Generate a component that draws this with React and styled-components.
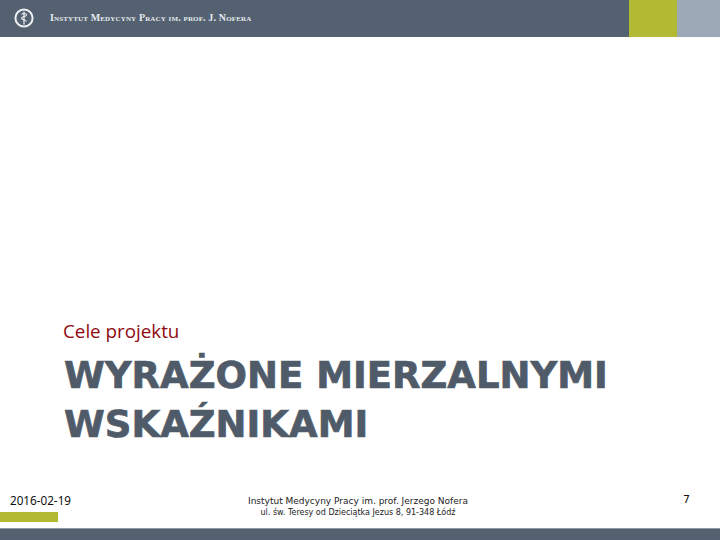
import React from "react";
import styled, { createGlobalStyle } from "styled-components";

const GlobalStyle = createGlobalStyle`
  html, body {
    margin: 0;
    padding: 0;
    background: #fff;
  }
`;

const Slide = styled.div`
  width: 720px;
  height: 540px;
  display: flex;
  flex-direction: column;
  overflow: hidden;
  background: #fff;
`;

const Header = styled.header`
  height: 37px;
  display: flex;
  align-items: stretch;
  background: #536171;
`;

const Brand = styled.div`
  flex: 1;
  display: flex;
  align-items: center;
  padding: 0 0 2px 13px;
  gap: 15px;
`;

const BrandName = styled.span`
  font-family: "Liberation Serif", serif;
  font-weight: bold;
  font-size: 10px;
  font-variant: small-caps;
  letter-spacing: 0.14px;
  color: #e8ebee;
  white-space: nowrap;
`;

const Block = styled.div`
  width: ${(p) => p.$width}px;
  background: ${(p) => p.$color};
`;

const Main = styled.main`
  flex: 1;
  display: flex;
  flex-direction: column;
  justify-content: flex-end;
  padding: 0 0 41px 64px;
`;

const Subtitle = styled.div`
  font-family: "Open Sans", sans-serif;
  font-size: 18.8px;
  line-height: 24px;
  color: #8f0a0f;
  margin-left: -1px;
  margin-bottom: 8px;
`;

const Title = styled.h1`
  margin: 0;
  font-family: "DejaVu Sans", sans-serif;
  font-weight: bold;
  font-size: 37px;
  line-height: 49px;
  color: #505b69;
  -webkit-text-stroke: 0.7px #505b69;
`;

const Footer = styled.footer`
  height: 38px;
  display: grid;
  grid-template-columns: 200px 316px 1fr;
`;

const DateCell = styled.div`
  display: flex;
  flex-direction: column;
  justify-content: space-between;
  height: 32px;
`;

const DateText = styled.div`
  font-family: "Noto Sans", sans-serif;
  font-size: 11.7px;
  line-height: 16px;
  padding: 2px 0 0 10px;
  color: #111;
`;

const LimeBar = styled.div`
  width: 58px;
  height: 10px;
  background: #b2ba33;
`;

const Address = styled.div`
  font-family: "DejaVu Sans", sans-serif;
  text-align: center;
  color: #222;
  padding-top: 5px;
`;

const AddressLine = styled.div`
  font-size: ${(p) => p.$size}px;
  line-height: 12px;
  white-space: nowrap;
`;

const PageNumber = styled.div`
  font-family: "DejaVu Sans", sans-serif;
  font-size: 11px;
  line-height: 16px;
  text-align: right;
  padding: 2px 30px 0 0;
  color: #111;
`;

const BottomBar = styled.div`
  height: 12px;
  background: #536171;
  border-top: 1px solid #8f9aa5;
  box-sizing: border-box;
`;

const Logo = () => (
  <svg width="22" height="22" viewBox="0 0 22 22" fill="none" stroke="#eef0f2">
    <circle cx="11" cy="11" r="8.6" strokeWidth="2" />
    <path d="M11 4.5V17.5" strokeWidth="1.2" />
    <path d="M8.5 7.5c1-1.4 5-1.4 5 .4 0 1.8-5 1.6-5 3.4 0 1.6 5 1.6 5 3.2" strokeWidth="1.1" />
  </svg>
);

const App = () => {
  return (
    <Slide>
      <GlobalStyle />
      <Header>
        <Brand>
          <Logo />
          <BrandName>Instytut Medycyny Pracy im. prof. J. Nofera</BrandName>
        </Brand>
        <Block $width={48} $color="#b2ba33" />
        <Block $width={43} $color="#9aa9b5" />
      </Header>
      <Main>
        <Subtitle>Cele projektu</Subtitle>
        <Title>
          WYRAŻONE MIERZALNYMI
          <br />
          WSKAŹNIKAMI
        </Title>
      </Main>
      <Footer>
        <DateCell>
          <DateText>2016-02-19</DateText>
          <LimeBar />
        </DateCell>
        <Address>
          <AddressLine $size={9}>Instytut Medycyny Pracy im. prof. Jerzego Nofera</AddressLine>
          <AddressLine $size={8}>ul. św. Teresy od Dzieciątka Jezus 8, 91-348 Łódź</AddressLine>
        </Address>
        <PageNumber>7</PageNumber>
      </Footer>
      <BottomBar />
    </Slide>
  );
};

export default App;
